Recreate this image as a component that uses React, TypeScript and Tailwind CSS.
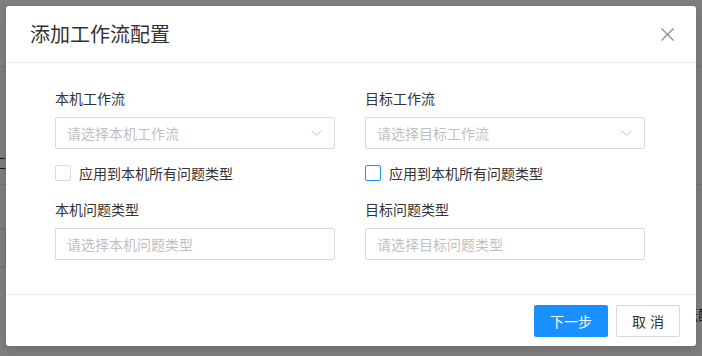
import { useState } from "react";

const font = { fontFamily: '"Noto Sans CJK SC", "Noto Sans", sans-serif' };

function ChevronDown() {
  return (
    <svg width="11" height="6" viewBox="0 0 11 6" fill="none">
      <path d="M0.5 0.5L5.5 5.5L10.5 0.5" stroke="#c0c4cc" strokeWidth="1" />
    </svg>
  );
}

function CloseIcon() {
  return (
    <svg width="13" height="13" viewBox="0 0 13 13" fill="none">
      <path d="M0.5 0.5L12.5 12.5M12.5 0.5L0.5 12.5" stroke="#8c8c8c" strokeWidth="1.3" />
    </svg>
  );
}

function SelectBox({ placeholder, arrow }: { placeholder: string; arrow?: boolean }) {
  return (
    <div className="flex items-center justify-between h-8 w-[280px] border border-[#d9d9d9] rounded-[2px] pl-[11px] pr-[12px] bg-white">
      <span className="text-[14px] text-[#bfbfbf] leading-none">{placeholder}</span>
      {arrow && <ChevronDown />}
    </div>
  );
}

function CheckRow({ active }: { active?: boolean }) {
  const [checked, setChecked] = useState(false);
  return (
    <div className="flex items-center h-4 cursor-pointer" onClick={() => setChecked(!checked)}>
      <span
        className={
          active
            ? "w-4 h-4 border border-[#1890ff] rounded-[2px] bg-white"
            : "w-4 h-4 border border-[#d9d9d9] rounded-[2px] bg-white"
        }
      />
      <span className="ml-2 text-[14px] text-[#333] leading-none">应用到本机所有问题类型</span>
    </div>
  );
}

function Field({ label, placeholder, arrow }: { label: string; placeholder: string; arrow?: boolean }) {
  return (
    <div className="flex flex-col">
      <div className="h-5 text-[14px] leading-5 text-[#333]">{label}</div>
      <div className="mt-[9px]">
        <SelectBox placeholder={placeholder} arrow={arrow} />
      </div>
    </div>
  );
}

export default function App() {
  return (
    <div className="relative w-[702px] h-[356px] overflow-hidden bg-white" style={font}>
      {/* page behind the dialog */}
      <div className="flex flex-col">
        <div className="h-[67px] border-b border-[#e8e8e8]" />
        <div className="h-[85px]" />
        <div className="flex justify-between h-[33px] border-b border-[#e8e8e8]">
          <span className="-ml-[8px] text-[14px] text-[#333]">工作</span>
        </div>
        <div className="h-[43px]" />
        <div className="-ml-[20px] w-[26px] h-[40px] border border-[#d9d9d9] rounded-[2px]" />
        <div className="h-[36px]" />
        <div className="flex justify-end">
          <span className="-mr-[10px] text-[14px] text-[#333]">坛配</span>
        </div>
      </div>

      {/* overlay */}
      <div className="absolute inset-0 bg-black/50 flex justify-center pt-[6px]">
        <div className="w-[690px] h-[340px] bg-white rounded-[3px] shadow-[0_4px_12px_rgba(0,0,0,0.15)] flex flex-col">
          <div className="h-[57px] shrink-0 border-b border-[#e8e8e8] flex items-center justify-between pl-6 pr-[22px]">
            <span className="text-[20px] text-[#333] leading-none">添加工作流配置</span>
            <CloseIcon />
          </div>

          <div className="flex-1 pt-[25px] pl-[49px]">
            <div className="grid grid-cols-[280px_280px] gap-x-[30px]">
              <Field label="本机工作流" placeholder="请选择本机工作流" arrow />
              <Field label="目标工作流" placeholder="请选择目标工作流" arrow />
              <div className="mt-4">
                <CheckRow />
              </div>
              <div className="mt-4">
                <CheckRow active />
              </div>
              <div className="mt-[18px]">
                <Field label="本机问题类型" placeholder="请选择本机问题类型" />
              </div>
              <div className="mt-[18px]">
                <Field label="目标问题类型" placeholder="请选择目标问题类型" />
              </div>
            </div>
          </div>

          <div className="h-[52px] shrink-0 border-t border-[#e8e8e8] flex items-center justify-end gap-2 pr-4 pt-[1px]">
            <button className="w-[74px] h-8 rounded-[2px] bg-[#1890ff] text-white text-[14px] leading-none">下一步</button>
            <button className="w-16 h-8 rounded-[2px] border border-[#d9d9d9] bg-white text-[#333] text-[14px] leading-none flex items-center justify-center gap-[4px]">
              <span>取</span>
              <span>消</span>
            </button>
          </div>
        </div>
      </div>
    </div>
  );
}
